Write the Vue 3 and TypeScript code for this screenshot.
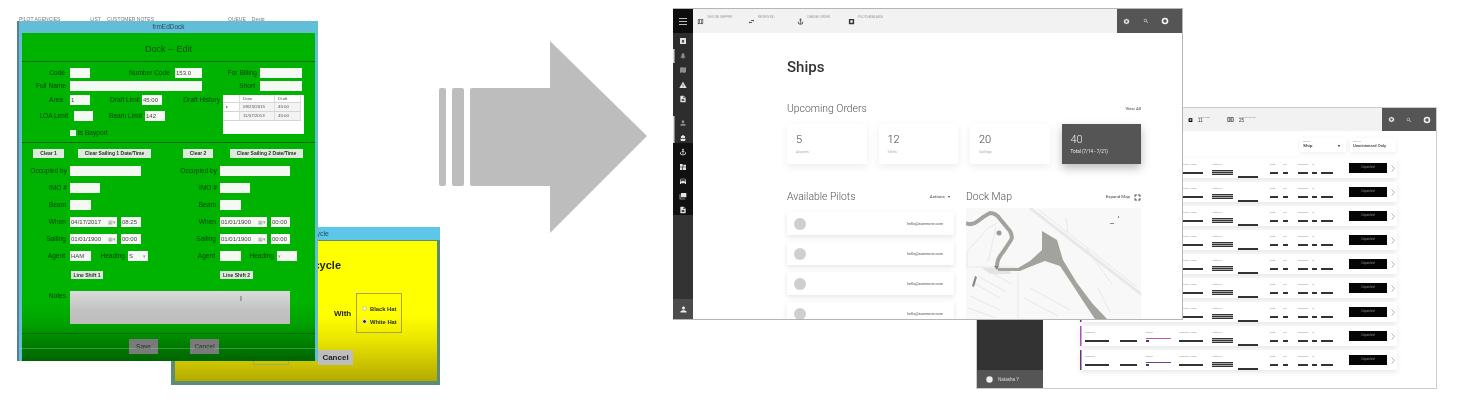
<script setup lang="ts">
type Cell = { k: string; x: number; w: number; t?: string; sel?: boolean }
type Row = { y: number; h: number; sep?: boolean; cells: Cell[] }

const l = (x: number, w: number, t: string): Cell => ({ k: 'label', x, w, t })
const i = (x: number, w: number, t = ''): Cell => ({ k: 'input', x, w, t })
const b = (x: number, w: number, t: string): Cell => ({ k: 'btn', x, w, t })
const d = (x: number, t: string): Cell => ({ k: 'date', x, w: 47, t })
const sel = (x: number, t = ''): Cell => ({ k: 'select', x, w: 20, t })

const sep = (y: number): Row => ({ y, h: 1, sep: true, cells: [] })
const row = (y: number, cells: Cell[], h = 10): Row => ({ y, h, cells })

const formRows: Row[] = [
  row(43, [{ k: 'head', x: 22, w: 293, t: 'Dock -- Edit' }], 12),
  sep(61),
  row(68, [l(22, 43, 'Code'), i(70, 20), l(110, 60, 'Number Code'), i(175, 27, '153.0'), l(207, 50, 'For Billing'), i(260, 42)]),
  row(81, [l(22, 44, 'Full Name'), i(70, 132), l(220, 35, 'Short'), i(260, 42)]),
  row(95, [l(22, 41, 'Area'), i(70, 20, '1'), l(95, 45, 'Draft Limit'), i(142, 20, '45:00'), l(168, 52, 'Draft History'), { k: 'grid', x: 223, w: 81 }]),
  row(111, [l(22, 46, 'LOA Limit'), i(74, 19), l(95, 47, 'Beam Limit'), i(145, 20, '142')]),
  row(128, [{ k: 'check', x: 70, w: 6 }, { k: 'plain', x: 78, w: 40, t: 'Is Bayport' }]),
  sep(142),
  row(149, [b(33, 31, 'Clear 1'), b(78, 73, 'Clear Sailing 1 Date/Time'), b(183, 30, 'Clear 2'), b(230, 73, 'Clear Sailing 2 Date/Time')], 9),
  row(166, [l(22, 45, 'Occupied by'), i(70, 71), l(170, 47, 'Occupied by'), i(220, 70)]),
  row(183, [l(22, 45, 'IMO #'), i(70, 30), l(170, 47, 'IMO #'), i(220, 30)]),
  row(200, [l(22, 44, 'Beam'), i(70, 21), l(170, 46, 'Beam'), i(220, 21)]),
  row(217, [l(22, 44, 'When'), d(70, '04/17/2017'), i(121, 20, '08:25'), l(170, 46, 'When'), d(220, '01/01/1900'), i(271, 19, '00:00')]),
  row(234, [l(22, 44, 'Sailing'), d(70, '01/01/1900'), i(121, 20, '00:00'), l(170, 46, 'Sailing'), d(220, '01/01/1900'), i(271, 19, '00:00')]),
  row(251, [l(22, 43, 'Agent'), i(70, 21, 'HAM'), l(95, 30, 'Heading'), sel(128, 'S'), l(190, 25, 'Agent'), i(220, 21), l(245, 29, 'Heading'), sel(277)]),
  row(271, [b(71, 32, 'Line Shift 1'), b(220, 33, 'Line Shift 2')], 8),
  row(291, [l(22, 44, 'Notes'), { k: 'notes', x: 70, w: 220 }], 33),
  sep(333),
  row(339, [{ k: 'act', x: 129, w: 29, t: 'Save' }, { k: 'act', x: 190, w: 29, t: 'Cancel' }], 15)
]

function rowGap(idx: number) {
  const prev = formRows[idx - 1]
  return (idx === 0 ? formRows[idx].y - 33 : formRows[idx].y - prev.y - prev.h) + 'px'
}
function cellStyle(r: Row, idx: number) {
  const start = idx === 0 ? 22 : r.cells[idx - 1].x + r.cells[idx - 1].w
  return { marginLeft: r.cells[idx].x - start + 'px', width: r.cells[idx].w + 'px' }
}

const paths = {
  home: 'M4 3h16a1 1 0 0 1 1 1v16a1 1 0 0 1-1 1H4a1 1 0 0 1-1-1V4a1 1 0 0 1 1-1zm8 5l-5 5h3v4h4v-4h3z',
  tree: 'M12 2l6 8h-3l5 7h-7v5h-2v-5H4l5-7H6z',
  map: 'M20.5 3l-.16.03L15 5.1 9 3 3.36 4.9c-.21.07-.36.25-.36.48V20.5c0 .28.22.5.5.5l.16-.03L9 18.9l6 2.1 5.64-1.9c.21-.07.36-.25.36-.48V3.5c0-.28-.22-.5-.5-.5z',
  warn: 'M1 21h22L12 2 1 21zm12-3h-2v-2h2v2zm0-4h-2v-4h2v4z',
  doc: 'M14 2H6c-1.1 0-2 .9-2 2v16c0 1.1.9 2 2 2h12c1.1 0 2-.9 2-2V8l-6-6zm2 16H8v-2h8v2zm0-4H8v-2h8v2zm-3-5V3.5L18.5 9H13z',
  person: 'M12 12c2.21 0 4-1.79 4-4s-1.79-4-4-4-4 1.79-4 4 1.79 4 4 4zm0 2c-2.67 0-8 1.34-8 4v2h16v-2c0-2.66-5.33-4-8-4z',
  boat: 'M12 3a3 3 0 0 1 3 3h3v6H6V6h3a3 3 0 0 1 3-3zM4 14h16l-2 7H6z',
  anchor: 'M17 15l1.55 1.55c-.96 1.69-3.33 3.04-5.55 3.37V11h3V9h-3V7.82C14.16 7.4 15 6.3 15 5c0-1.65-1.35-3-3-3S9 3.35 9 5c0 1.3.84 2.4 2 2.82V9H8v2h3v8.92c-2.22-.33-4.59-1.68-5.55-3.37L7 15l-4-3v3c0 3.88 4.92 7 9 7s9-3.12 9-7v-3l-4 3zM12 4c.55 0 1 .45 1 1s-.45 1-1 1-1-.45-1-1 .45-1 1-1z',
  route: 'M3 3h8v8H3zM13 5h8v6h-8zM3 13h6v8H3zM11 13h10v8H11z',
  car: 'M18.92 6.01C18.72 5.42 18.16 5 17.5 5h-11c-.66 0-1.21.42-1.42 1.01L3 12v8c0 .55.45 1 1 1h1c.55 0 1-.45 1-1v-1h12v1c0 .55.45 1 1 1h1c.55 0 1-.45 1-1v-8l-2.08-5.99zM6.5 16c-.83 0-1.5-.67-1.5-1.5S5.67 13 6.5 13s1.5.67 1.5 1.5S7.33 16 6.5 16zm11 0c-.83 0-1.5-.67-1.5-1.5s.67-1.5 1.5-1.5 1.5.67 1.5 1.5-.67 1.5-1.5 1.5zM5 11l1.5-4.5h11L19 11H5z',
  stack: 'M6 3h16v13H6zM2 7h2v13h15v2H2z',
  swap: 'M6.99 11L3 15l3.99 4v-3H14v-2H6.99v-3zM21 9l-3.99-4v3H10v2h7.01v3L21 9z',
  square: 'M4 3h16a1 1 0 0 1 1 1v16a1 1 0 0 1-1 1H4a1 1 0 0 1-1-1V4a1 1 0 0 1 1-1zm4 5v8h8V8z',
  split: 'M2 4h9v16H2zM13 4h9v16h-9zM4 6v12h5V6zM15 6v12h5V6z',
  outline: 'M3 5l6-2 6 2 6-2v16l-6 2-6-2-6 2zM5 6.500v11.500l3-1V5.500zM10 5.500V17l4 1.500V7zM16 7v11.500l3-1V6z',
  gear: 'M12 2l2 3 4-1 1 4 3 2-2 2 2 2-3 2-1 4-4-1-2 3-2-3-4 1-1-4-3-2 2-2-2-2 3-2 1-4 4 1zm0 6a4 4 0 1 0 0 8 4 4 0 0 0 0-8z',
  search: 'M15.5 14h-.79l-.28-.27A6.47 6.47 0 0 0 16 9.5 6.5 6.5 0 1 0 9.5 16c1.61 0 3.09-.59 4.23-1.57l.27.28v.79l5 4.99L20.49 19l-4.99-5zm-6 0C7.01 14 5 11.99 5 9.5S7.01 5 9.5 5 14 7.01 14 9.5 11.99 14 9.5 14z',
  round: 'M12 2a10 10 0 1 0 0 20 10 10 0 0 0 0-20zm0 5a5 5 0 1 1 0 10 5 5 0 0 1 0-10z'
}

const navTop = [
  { d: paths.home },
  { d: paths.tree, dim: true, on: true },
  { d: paths.map, dim: true },
  { d: paths.warn },
  { d: paths.doc },
  { d: paths.person, dim: true, on: true, space: true },
  { d: paths.boat, on: true }
]
const navBottom = [paths.anchor, paths.route, paths.car, paths.stack, paths.doc]

const topItems = [
  { d: paths.outline, t: 'CHOOSE SHIPPER', w: 51 },
  { d: paths.swap, t: 'REVIEW BID', w: 49 },
  { d: paths.anchor, t: 'CHANGE ORDER', w: 51 },
  { d: paths.square, t: 'PILOTS AVAILABLE', w: 40 }
]

const cards = [
  { n: '5', t: 'Airports' },
  { n: '12', t: 'Shifts' },
  { n: '20', t: 'Sailings' },
  { n: '40', t: 'Total (7/14 - 7/21)', dark: true }
]

type Bar = { x: number; w: number; top?: string; kind?: string }
const bars: Bar[] = [
  { x: 1085, w: 24, top: 'Customer' },
  { x: 1120, w: 17 },
  { x: 1146, w: 25, top: 'Status', kind: 'accent' },
  { x: 1179, w: 24, top: 'Customer  Vessel' },
  { x: 1212, w: 21, top: 'Assigned', kind: 'stack' },
  { x: 1238, w: 20, kind: 'high' },
  { x: 1270, w: 8, top: 'Draft', kind: 'thick' },
  { x: 1283, w: 5, top: 'LOA', kind: 'thick' },
  { x: 1298, w: 10, top: 'Shipment' },
  { x: 1312, w: 5, top: 'Id' },
  { x: 1321, w: 12 }
]
function barStyle(idx: number) {
  const start = idx === 0 ? 1080 : bars[idx - 1].x + bars[idx - 1].w
  return { marginLeft: bars[idx].x - start + 'px', width: bars[idx].w + 'px' }
}
const orders = [1, 2, 3, 4, 5, 6, 7, 8, 9]
</script>

<template>
  <div class="stage">
    <div class="yellow soft">
      <div class="y-title"><span>frmRecycle</span></div>
      <div class="y-body">
        <div class="y-head">Recycle</div>
        <div class="y-mid">
          <span class="y-with">With</span>
          <div class="y-group">
            <div class="y-radio"><i></i>Black Hat</div>
            <div class="y-radio"><i class="dot"></i>White Hat</div>
          </div>
        </div>
        <div class="y-actions">
          <span class="y-ok">OK</span>
          <span class="y-cancel">Cancel</span>
        </div>
      </div>
    </div>

    <div class="peek soft">
      <span>PILOT AGENCIES</span><span>LIST</span><span>CUSTOMER NOTES</span><span>QUEUE</span><span>Desig</span>
    </div>

    <div class="green soft">
      <div class="g-title">frmEdDock</div>
      <div class="g-body">
        <div
          v-for="(r, ri) in formRows"
          :key="r.y"
          class="f-row"
          :class="{ 'f-sep': r.sep }"
          :style="{ marginTop: rowGap(ri), height: r.h + 'px' }"
        >
          <template v-for="(c, ci) in r.cells" :key="ci">
            <div v-if="c.k === 'grid'" class="f-grid" :style="cellStyle(r, ci)">
              <span class="gh"></span><span class="gh">Date</span><span class="gh">Draft</span>
              <span class="gc mark">▸</span><span class="gc">09/23/2015</span><span class="gc">45:00</span>
              <span class="gc"></span><span class="gc">11/07/2013</span><span class="gc">45:00</span>
            </div>
            <div v-else :class="['f-' + c.k]" :style="cellStyle(r, ci)">
              {{ c.t }}<span v-if="c.k === 'date'" class="caret">▦▾</span><span v-if="c.k === 'select'" class="caret">▾</span>
            </div>
          </template>
        </div>
        <div class="f-cursor">I</div>
      </div>
      <div class="f-scan"></div>
    </div>

    <svg class="arrow" width="210" height="194" viewBox="438 40 210 194">
      <path d="M439 90q0-2 2-2h3q2 0 2 2v94q0 2-2 2h-3q-2 0-2-2z" />
      <path d="M452 90q0-2 2-2h8q2 0 2 2v94q0 2-2 2h-8q-2 0-2-2z" />
      <path d="M470 90q0-2 2-2h78V41l97 95-97 97v-47h-78q-2 0-2-2z" />
    </svg>

    <div class="back soft">
      <div class="b-side">
        <div class="b-fill"></div>
        <div class="b-user">
          <svg width="7" height="7" viewBox="0 0 24 24"><circle cx="12" cy="12" r="11" fill="#eee" /></svg>
          <span>Natasha Y</span>
        </div>
      </div>
      <div class="b-main">
        <div class="b-top">
          <div class="b-stat">
            <svg width="5" height="6" viewBox="0 0 24 24"><path :d="paths.square" /></svg>
            <div><small>Quote  Today</small><b>11</b></div>
          </div>
          <div class="b-stat">
            <svg width="7" height="7" viewBox="0 0 24 24"><path :d="paths.split" /></svg>
            <div><small>Invoices  Paid  Tot</small><b>25</b></div>
          </div>
          <div class="b-actions">
            <svg width="7" height="7" viewBox="0 0 24 24"><path :d="paths.gear" /></svg>
            <svg width="6" height="6" viewBox="0 0 24 24"><path :d="paths.search" /></svg>
            <svg width="8" height="8" viewBox="0 0 24 24"><path :d="paths.round" /></svg>
          </div>
        </div>
        <div class="b-filters">
          <div class="filter">
            <small>Sort by</small>
            <div class="filter-v">Ship<span>▾</span></div>
          </div>
          <div class="filter">
            <small>Filter by</small>
            <div class="filter-v small">Unminimized Only</div>
          </div>
        </div>
        <div class="b-rows">
          <div v-for="o in orders" :key="o" class="order" :class="{ flag: o === 8, deep: o === 7 || o === 9 }">
            <div v-for="(c, ci) in bars" :key="c.x" class="bar" :class="c.kind" :style="barStyle(ci)">
              <small>{{ c.top }}</small>
              <i></i>
            </div>
            <div class="order-btn">Dispatched</div>
            <svg class="chev" width="4" height="7" viewBox="0 0 4 7"><path d="M.5.5l3 3-3 3" /></svg>
          </div>
        </div>
      </div>
    </div>

    <div class="main soft">
      <div class="side">
        <div class="burger"><i></i><i></i><i></i></div>
        <div class="nav-a">
          <div v-for="n in navTop" :key="n.d" class="nav" :class="{ dim: n.dim, on: n.on, space: n.space }">
            <svg width="8" height="8" viewBox="0 0 24 24"><path :d="n.d" /></svg>
          </div>
        </div>
        <div class="nav-b">
          <div v-for="(p, pi) in navBottom" :key="pi" class="nav">
            <svg width="8" height="8" viewBox="0 0 24 24"><path :d="p" /></svg>
          </div>
        </div>
        <div class="side-fill"></div>
        <div class="side-user">
          <svg width="9" height="9" viewBox="0 0 24 24"><path :d="paths.person" /></svg>
        </div>
      </div>

      <div class="page">
        <header class="topbar">
          <div class="top-items">
            <div v-for="t in topItems" :key="t.t" class="top-item" :style="{ width: t.w + 'px' }">
              <svg width="7" height="7" viewBox="0 0 24 24"><path :d="t.d" /></svg>
              <span>{{ t.t }}</span>
            </div>
          </div>
          <div class="top-actions">
            <svg width="7" height="7" viewBox="0 0 24 24"><path :d="paths.gear" /></svg>
            <svg width="6" height="6" viewBox="0 0 24 24"><path :d="paths.search" /></svg>
            <svg width="8" height="8" viewBox="0 0 24 24"><path :d="paths.round" /></svg>
          </div>
        </header>

        <div class="content">
          <h1>Ships</h1>
          <div class="sec-head">
            <h2>Upcoming Orders</h2>
            <span>View All</span>
          </div>
          <div class="cards">
            <div v-for="c in cards" :key="c.n" class="card" :class="{ dark: c.dark }">
              <div class="num">{{ c.n }}</div>
              <div class="sub">{{ c.t }}</div>
            </div>
          </div>

          <div class="columns">
            <section class="pilots">
              <div class="sec-head">
                <h2>Available Pilots</h2>
                <span class="act">Actions &nbsp;&nbsp;▾</span>
              </div>
              <div v-for="p in 4" :key="p" class="pilot">
                <i></i>
                <span>hello@someone.com</span>
              </div>
            </section>
            <section class="dock">
              <div class="sec-head">
                <h2>Dock Map</h2>
                <span class="expand">Expand Map
                  <svg width="7" height="7" viewBox="0 0 24 24"><path d="M2 2h8v3H5v5H2zM14 2h8v8h-3V5h-5zM2 14h3v5h5v3H2zM19 14h3v8h-8v-3h5z" /></svg>
                </span>
              </div>
              <svg class="map" width="175" height="111" viewBox="0 0 175 111">
                <rect width="175" height="111" fill="#f8f8f8" />
                <g fill="none" stroke="#e8e8e8">
                  <path d="M64 0L176 87" stroke-width="3" />
                  <path d="M73 2l98 77M100 10l2 14M1 44L22 20 31 15M1 59h50M52 65v45M1 44v15" />
                  <path d="M8 75l26 15M12 68l28 16M16 60l30 16M4 88l30 14M2 100l28 10M64 80l40 22M58 90l34 18M120 40l26 36M132 80l12 24M30 20l-8 34" />
                </g>
                <g fill="#e4e4e4"><path d="M16 60h24l6 6H24z" /></g>
                <path
                  fill="none"
                  stroke="#a3a39d"
                  stroke-width="4"
                  d="M0 15q6 3 12-2t12-8q6 0 10 6l10 12q3 6 1 9l-8 12q-6 7-6 14"
                />
                <path
                  fill="#a3a39d"
                  d="M76 23l15 9 6 20 14 23 15 20 15 16h-12l-12-18-11-17-12-18-15-5-13 5-12 5H32v-3h20l12-7 12-11z"
                />
                <path fill="#888" d="M9 68l2 1-3 10-2-1zM144 15h4v1h-4zM152 8h1v2h-1zM28 58h5l-2 4z" />
                <circle cx="33" cy="25" r="2.5" fill="#999" />
              </svg>
            </section>
          </div>
        </div>
      </div>
    </div>
  </div>
</template>

<style>
html,
body {
  margin: 0;
  background: #fff;
}
</style>

<style scoped>
.stage {
  position: relative;
  width: 1461px;
  height: 413px;
  overflow: hidden;
  background: #fff;
  font-family: 'Liberation Sans', Arial, sans-serif;
}
.soft {
  filter: blur(0.6px);
}
.stage small {
  display: block;
  font-weight: 400;
}

/* legacy windows */
.peek {
  position: absolute;
  left: 19px;
  top: 17px;
  width: 300px;
  height: 5px;
  display: flex;
  font-size: 5px;
  line-height: 5px;
  color: #777;
}
.peek span:nth-child(2) {
  margin-left: 30px;
}
.peek span:nth-child(3) {
  margin-left: 6px;
}
.peek span:nth-child(4) {
  margin-left: 74px;
}
.peek span:nth-child(5) {
  margin-left: 6px;
}
.green {
  position: absolute;
  left: 17px;
  top: 21px;
  width: 301px;
  height: 340px;
  background: #62bdd6;
  border-left: 2px solid #5a7f8c;
  box-sizing: border-box;
}
.g-title {
  height: 12px;
  text-align: center;
  font-size: 6.5px;
  line-height: 12px;
  color: #25505c;
}
.g-body {
  position: relative;
  height: 328px;
  margin: 0 3px 0 3px;
  overflow: hidden;
  background: linear-gradient(#00b300 0, #00b300 270px, #00a000 292px, #008000 310px, #006400 328px);
}
.f-scan {
  position: absolute;
  left: 0;
  right: 0;
  top: 327px;
  height: 1px;
  background: rgba(150, 220, 180, 0.35);
}
.f-row {
  display: flex;
  align-items: flex-start;
}
.f-sep {
  background: #056b05;
}
.f-row > div {
  flex: none;
  box-sizing: border-box;
}
.f-head {
  text-align: center;
  font-size: 9px;
  line-height: 12px;
  color: #0b4f0b;
}
.f-label,
.f-plain {
  font-size: 6.6px;
  line-height: 10px;
  color: #083f08;
  white-space: nowrap;
}
.f-label {
  text-align: right;
}
.f-input,
.f-date,
.f-select {
  height: 10px;
  background: #f4f9f4;
  padding-left: 1px;
  font-size: 6px;
  line-height: 10px;
  color: #444;
  white-space: nowrap;
  display: flex;
  justify-content: space-between;
}
.f-select {
  padding-right: 1px;
}
.caret {
  color: #999;
  font-size: 5px;
  margin-right: 1px;
}
.f-btn {
  height: 100%;
  background: #dfeadf;
  text-align: center;
  font-size: 5px;
  font-weight: 700;
  line-height: 8.5px;
  color: #253525;
  white-space: nowrap;
}
.f-check {
  width: 6px;
  height: 6px;
  margin-top: 2px;
  background: #e6f5e6;
}
.f-grid {
  height: 39px;
  margin-top: 0;
  background: #fff;
  display: grid;
  grid-template-columns: 17px 35px 26px;
  grid-template-rows: 8px 9px 9px;
  font-size: 4.4px;
  line-height: 8px;
  color: #555;
}
.gh,
.gc {
  padding-left: 3px;
  border-bottom: 1px solid #d5d5d5;
  border-right: 1px solid #ddd;
  box-sizing: border-box;
}
.gc {
  background: #f3f3f3;
}
.gc.mark,
.gh:first-child,
.gc:nth-child(7) {
  background: #fff;
}
.f-notes {
  height: 33px;
  background: linear-gradient(#dadada, #c2c2c2 60%, #bcbcbc);
}
.f-act {
  height: 15px;
  background: #7a7a7a;
  text-align: center;
  font-size: 6.5px;
  line-height: 15px;
  color: #2d2d2d;
}
.f-cursor {
  position: absolute;
  left: 218px;
  top: 262px;
  font-size: 7px;
  color: #444;
}
.yellow {
  position: absolute;
  left: 171px;
  top: 227px;
  width: 269px;
  height: 158px;
  background: #5b8c78;
}
.y-title {
  height: 13px;
  background: #5cc7e8;
  text-align: right;
  font-size: 7px;
  line-height: 13px;
  color: #2a4f5e;
}
.y-title span {
  display: block;
  width: 158px;
}
.y-body {
  height: 140px;
  margin: 1px 3px 0 4px;
  background: linear-gradient(#ffff00 0, #ffff00 74px, #e9e300 100px, #c8c000 125px, #b2aa00 140px);
  position: relative;
}
.y-head {
  width: 166px;
  padding-top: 17px;
  text-align: right;
  font-size: 11px;
  font-weight: 700;
  line-height: 14px;
  color: #222;
}
.y-mid {
  display: flex;
  align-items: center;
  margin: 21px 0 0 159px;
}
.y-with {
  font-size: 8px;
  font-weight: 700;
  color: #222;
  width: 22px;
}
.y-group {
  width: 46px;
  height: 40px;
  box-sizing: border-box;
  border: 1px solid #a9a44c;
  padding-top: 8px;
}
.y-radio {
  display: flex;
  align-items: center;
  gap: 3px;
  height: 13px;
  padding-left: 5px;
  font-size: 5.8px;
  font-weight: 700;
  color: #2a2a2a;
  white-space: nowrap;
}
.y-radio i {
  width: 5px;
  height: 5px;
  border-radius: 50%;
  background: #f9f9c0;
  box-sizing: border-box;
  border: 1px solid #cfcf80;
}
.y-radio i.dot {
  background: #333;
  border-color: #eee;
}
.y-actions {
  display: flex;
  margin: 17px 0 0 78px;
}
.y-ok {
  width: 36px;
  height: 15px;
  border: 1px solid #a8a860;
  box-sizing: border-box;
  color: transparent;
  font-size: 8px;
}
.y-cancel {
  width: 35px;
  height: 15px;
  margin-left: 29px;
  background: #bdbdbd;
  text-align: center;
  font-size: 8px;
  font-weight: 700;
  line-height: 15px;
  color: #222;
}
.arrow {
  position: absolute;
  left: 438px;
  top: 40px;
  fill: #bdbdbd;
  filter: blur(0.5px);
}

/* back window */
.back {
  position: absolute;
  left: 977px;
  top: 108px;
  width: 459px;
  height: 280px;
  display: flex;
  background: #fff;
  outline: 1px solid #ccc;
}
.b-side {
  width: 66px;
  display: flex;
  flex-direction: column;
}
.b-fill {
  flex: 1;
  background: #333;
}
.b-user {
  height: 18px;
  background: #555;
  display: flex;
  align-items: center;
  gap: 5px;
  padding-left: 9px;
  font-size: 4.6px;
  color: #ddd;
}
.b-main {
  flex: 1;
  min-width: 0;
}
.b-top {
  height: 23px;
  padding-left: 145px;
  background: #f2f2f2;
  display: flex;
  align-items: center;
}
.b-stat {
  width: 39px;
  display: flex;
  align-items: center;
  gap: 5px;
  font-size: 2.6px;
  color: #777;
  white-space: nowrap;
}
.b-stat svg {
  flex: none;
}
.b-stat b {
  display: block;
  font-size: 4.5px;
  font-weight: 400;
  color: #333;
}
.b-actions {
  width: 54px;
  height: 23px;
  margin-left: auto;
  background: #555;
  fill: #eee;
  display: flex;
  align-items: center;
  justify-content: space-around;
}
.b-filters {
  display: flex;
  gap: 4px;
  height: 14px;
  margin: 7px 0 0 257px;
}
.filter {
  width: 46px;
  height: 14px;
  box-sizing: border-box;
  padding: 2px 0 0 3px;
  background: #fff;
  box-shadow: 0 1px 4px rgba(0, 0, 0, 0.08);
}
.filter small {
  font-size: 2.4px;
  line-height: 3px;
  color: #888;
}
.filter-v {
  display: flex;
  justify-content: space-between;
  padding-right: 6px;
  font-size: 4.4px;
  line-height: 6px;
  color: #444;
  font-weight: 700;
  white-space: nowrap;
}
.filter-v.small {
  font-size: 3.8px;
}
.b-rows {
  margin: 6px 0 0 37px;
  display: flex;
  flex-direction: column;
  gap: 4px;
}
.order {
  width: 317px;
  height: 20px;
  box-sizing: border-box;
  display: flex;
  align-items: flex-start;
  background: #fff;
  box-shadow: 0 2px 5px rgba(0, 0, 0, 0.1);
}
.order.flag {
  box-shadow: inset 1.5px 0 #b04fb4, 0 2px 5px rgba(0, 0, 0, 0.1);
}
.order.deep {
  box-shadow: inset 1.5px 0 #5c3a82, 0 2px 5px rgba(0, 0, 0, 0.1);
}
.bar {
  flex: none;
  padding-top: 5px;
  height: 20px;
  box-sizing: border-box;
}
.bar small {
  height: 5px;
  font-size: 2.4px;
  line-height: 3px;
  color: #888;
  white-space: nowrap;
}
.bar i {
  display: block;
  height: 1.6px;
  margin-top: 4px;
  background: #333;
}
.bar.thick i {
  height: 2px;
}
.bar.high {
  padding-top: 13px;
}
.bar.high i {
  margin-top: 0;
}
.bar.stack i {
  height: 5px;
  margin-top: 2px;
  background: repeating-linear-gradient(#333 0, #333 1px, #aaa 1px, #aaa 2px);
}
.bar.accent i {
  background: #3a3a3a;
}
.order.flag .bar.accent i,
.order.deep .bar.accent i {
  height: 1.4px;
  margin-top: 2px;
  background: #b958bd;
}
.order.deep .bar.accent i {
  background: #6f3f98;
}
.order.flag .bar.accent i::after,
.order.deep .bar.accent i::after {
  content: '';
  display: block;
  width: 3px;
  height: 2px;
  position: relative;
  top: 2.4px;
  background: #444;
}
.order-btn {
  width: 38px;
  height: 10px;
  margin: 5px 0 0 16px;
  background: #050505;
  text-align: center;
  font-size: 2.6px;
  line-height: 10px;
  color: #999;
}
.chev {
  margin: 7px 0 0 4px;
  fill: none;
  stroke: #999;
  stroke-width: 0.8;
}

/* main window */
.main {
  position: absolute;
  left: 673px;
  top: 8px;
  width: 510px;
  height: 312px;
  box-sizing: border-box;
  display: flex;
  overflow: hidden;
  background: #fff;
  border: 1px solid #b5b5b5;
  border-left: 0;
}
.side {
  flex: none;
  width: 20px;
  display: flex;
  flex-direction: column;
  background: #333;
}
.burger {
  height: 24px;
  flex: none;
  box-sizing: border-box;
  padding-top: 9px;
  background: #0d0d0d;
}
.burger i {
  display: block;
  width: 8px;
  height: 1px;
  margin: 0 auto 2px;
  background: #bbb;
}
.nav-a {
  flex: none;
  background: #2d2d2d;
  padding-top: 1px;
  height: 110px;
  box-sizing: border-box;
}
.nav-b {
  flex: none;
  height: 72px;
  padding-top: 2px;
  box-sizing: border-box;
  background: #111;
}
.nav {
  height: 14.5px;
  display: flex;
  align-items: center;
  justify-content: center;
  fill: #e4e4e4;
  fill-rule: evenodd;
}
.nav.dim {
  fill: #8c8c8c;
}
.nav.on {
  box-shadow: inset 1.5px 0 #ddd;
}
.nav.space {
  margin-top: 9.5px;
}
.side-fill {
  flex: 1;
}
.side-user {
  flex: none;
  height: 20px;
  background: #4c4c4c;
  fill: #eee;
  display: flex;
  align-items: center;
  justify-content: center;
}
.page {
  flex: 1;
  min-width: 0;
}
.topbar {
  height: 24px;
  background: #f2f2f2;
  display: flex;
}
.top-items {
  flex: 1;
  display: flex;
  padding-left: 4px;
}
.top-item {
  flex: none;
  display: flex;
  align-items: center;
  gap: 3px;
  fill: #333;
  fill-rule: evenodd;
  font-size: 2.8px;
  color: #999;
  white-space: nowrap;
}
.top-item svg {
  flex: none;
  margin-top: 1px;
}
.top-item span {
  margin-top: -8px;
}
.top-actions {
  flex: none;
  width: 65px;
  background: #555;
  fill: #f3f3f3;
  display: flex;
  align-items: center;
  justify-content: space-between;
  box-sizing: border-box;
  padding: 0 13px 0 6px;
}
.content {
  padding-left: 94px;
  width: 354px;
}
h1 {
  margin: 0;
  padding-top: 25px;
  font: 500 15px/18px Roboto, sans-serif;
  color: #333;
}
.sec-head {
  display: flex;
  align-items: center;
  justify-content: space-between;
  height: 12px;
}
.sec-head h2 {
  margin: 0;
  font: 300 10.4px/12px Roboto, sans-serif;
  color: #555;
  white-space: nowrap;
}
.sec-head span {
  font: 400 4.4px/12px Roboto, sans-serif;
  color: #444;
  white-space: nowrap;
}
.content > .sec-head {
  margin-top: 27px;
}
.cards {
  display: grid;
  grid-template-columns: repeat(4, 1fr);
  gap: 12px;
  margin-top: 9px;
}
.card {
  height: 40px;
  box-sizing: border-box;
  padding: 9px 0 0 9px;
  background: #fff;
  box-shadow: 0 3px 8px rgba(0, 0, 0, 0.07);
}
.card.dark {
  background: #555;
  box-shadow: 0 4px 9px rgba(0, 0, 0, 0.28);
}
.num {
  font: 300 11px/13px Roboto, sans-serif;
  color: #444;
}
.sub {
  margin-top: 3px;
  font: 400 3.6px/6px Roboto, sans-serif;
  color: #aaa;
}
.dark .num,
.dark .sub {
  color: #eee;
}
.dark .sub {
  font-size: 4.6px;
}
.columns {
  display: flex;
  gap: 12px;
  margin-top: 27px;
}
.pilots {
  width: 167px;
  flex: none;
}
.act {
  margin-right: 4px;
}
.pilot {
  height: 23px;
  margin: 9px 0 7px;
  display: flex;
  align-items: center;
  justify-content: space-between;
  padding: 0 11px 0 7px;
  background: #fff;
  box-shadow: 0 2px 5px rgba(0, 0, 0, 0.1);
}
.pilot + .pilot {
  margin-top: 0;
}
.pilot i {
  width: 12px;
  height: 12px;
  border-radius: 50%;
  background: #cfcfcf;
}
.pilot span {
  font: 400 3.8px/6px Roboto, sans-serif;
  color: #555;
}
.dock {
  flex: 1;
  min-width: 0;
}
.expand {
  display: flex;
  align-items: center;
  gap: 4px;
}
.expand svg {
  fill: #444;
}
.map {
  display: block;
  margin-top: 5px;
}
</style>
